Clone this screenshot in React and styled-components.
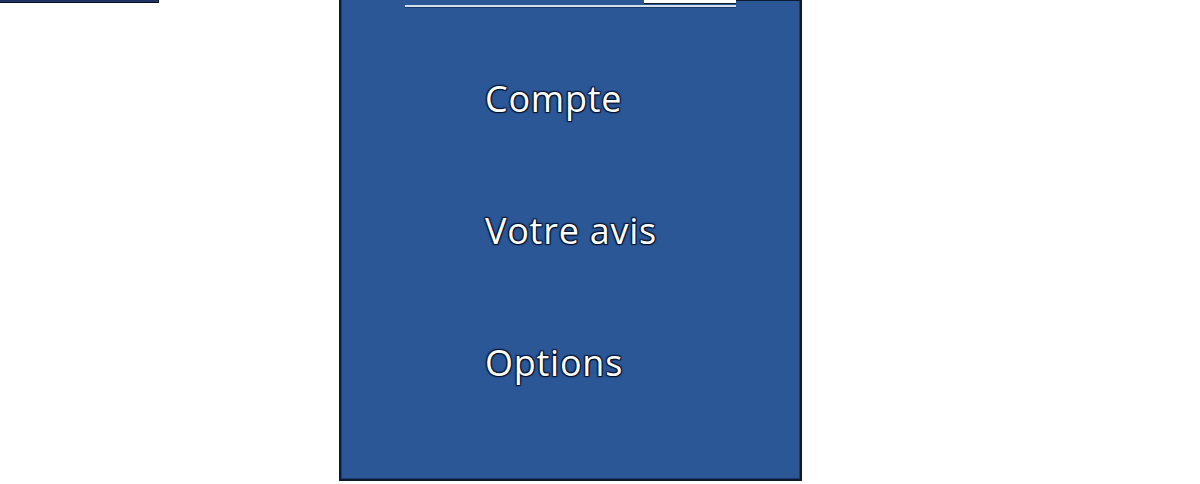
import React from "react";
import styled, { createGlobalStyle } from "styled-components";

const Global = createGlobalStyle`
  html, body { margin: 0; padding: 0; background: #ffffff; }
  body { width: 1200px; height: 484px; overflow: hidden; }
`;

const Page = styled.div`
  display: flex;
  align-items: flex-start;
  width: 1200px;
  height: 484px;
`;

const Stub = styled.div`
  width: 158px;
  height: 2px;
  background: #1d3560;
  border-bottom: 1px solid #07112a;
  border-right: 1px solid #07112a;
`;

const Panel = styled.div`
  position: relative;
  box-sizing: border-box;
  margin-left: 180px;
  width: 463px;
  height: 481px;
  background: #2b5797;
  border: 2px solid #0c1a33;
  border-top: none;
  box-shadow: inset 1px 0 0 #1b3a6e, inset -1px 0 0 #1b3a6e, inset 0 -1px 0 #1b3a6e;
  display: flex;
  flex-direction: column;
  padding: 81px 0 0 144px;
  gap: 96px;
  font-family: "Open Sans", "Noto Sans", sans-serif;
`;

const TopEdge = styled.div`
  position: absolute;
  top: 0;
  left: 395px;
  right: -2px;
  height: 1px;
  background: #0c1a33;
`;

const Notch = styled.div`
  position: absolute;
  top: 0;
  left: 303px;
  width: 92px;
  height: 3px;
  background: #ffffff;
  border-bottom: 1px solid #0c1a33;
`;

const Rule = styled.div`
  position: absolute;
  top: 5px;
  left: 64px;
  width: 331px;
  height: 2px;
  background: #d3deec;
  box-shadow: 0 1px 0 #1a3968;
`;

const Item = styled.div`
  color: #ffffff;
  font-size: 36px;
  line-height: 36px;
  height: 36px;
  letter-spacing: 0.75px;
  white-space: nowrap;
  text-shadow: 0 0 2px #06122b, 1px 1px 1px #06122b, -1px -1px 1px #0a1a3a,
    1px -1px 1px #0a1a3a, -1px 1px 1px #0a1a3a;
`;

export default function App() {
  return (
    <>
      <Global />
      <Page>
        <Stub />
        <Panel>
          <TopEdge />
          <Notch />
          <Rule />
          <Item>Compte</Item>
          <Item>Votre avis</Item>
          <Item>Options</Item>
        </Panel>
      </Page>
    </>
  );
}
